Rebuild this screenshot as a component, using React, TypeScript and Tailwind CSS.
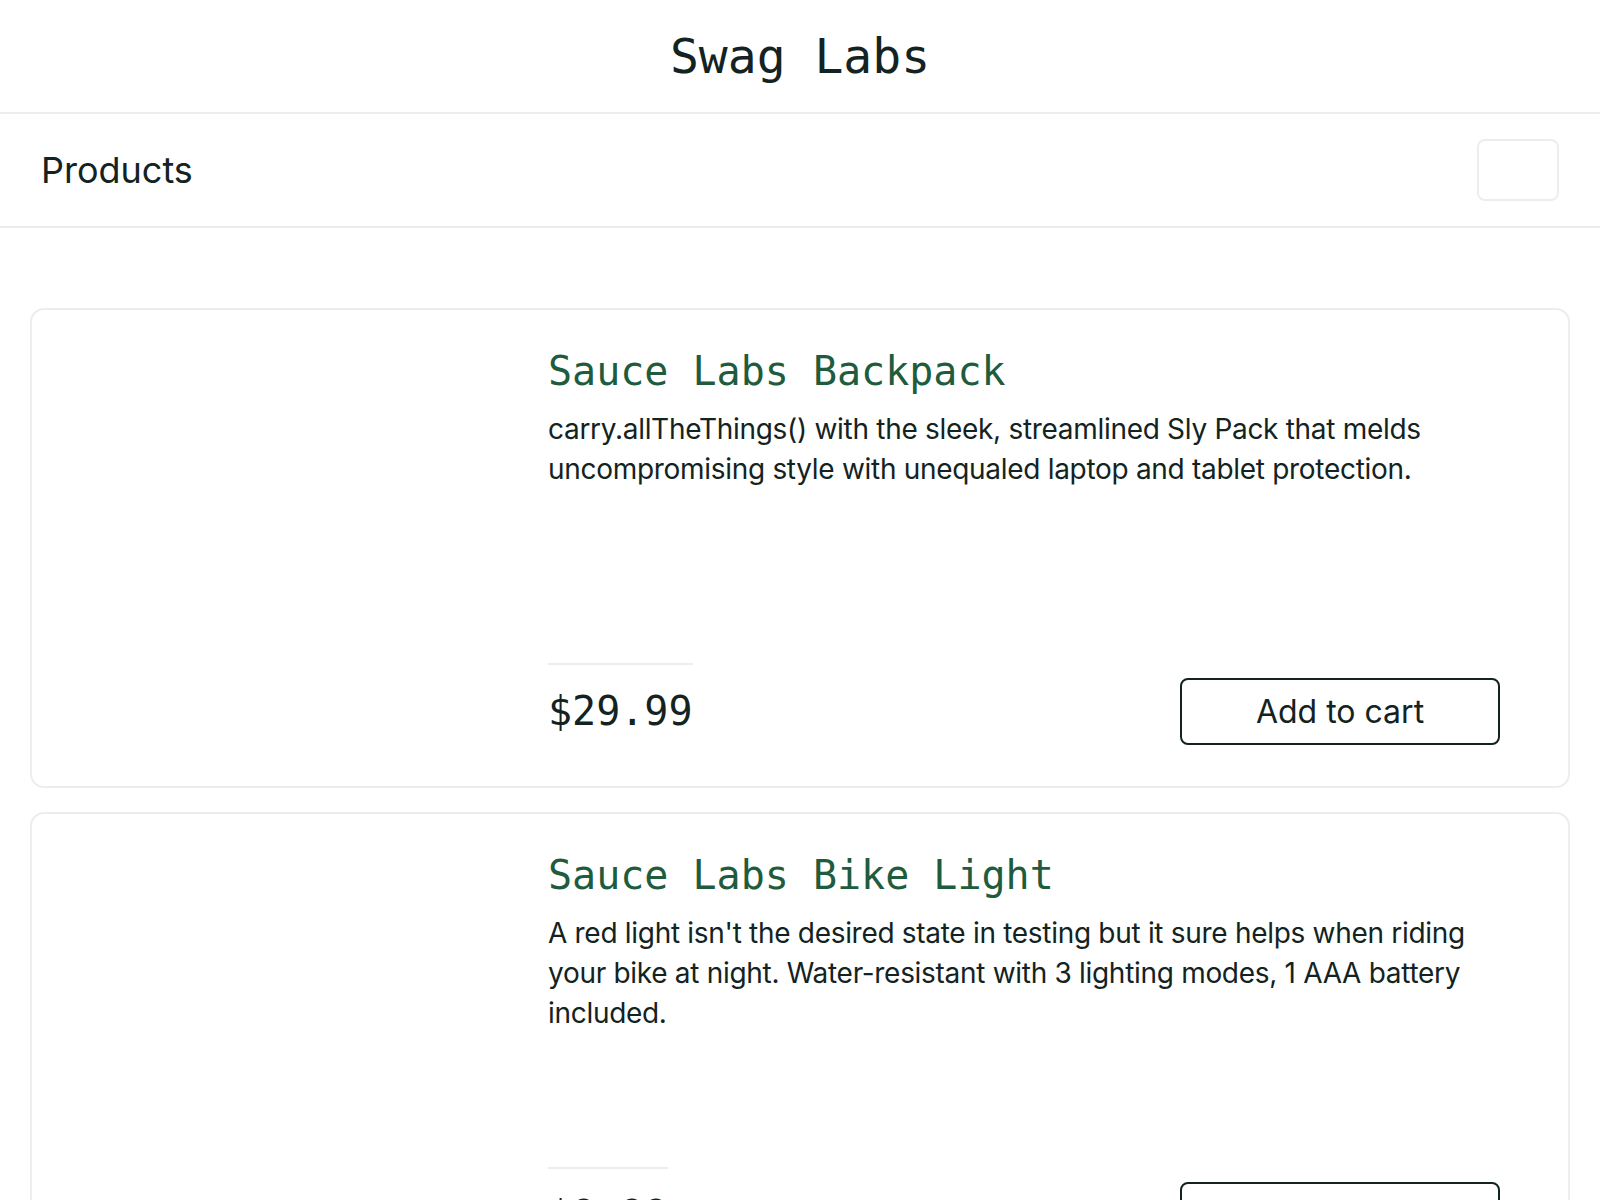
import React from "react";

const mono = "font-['DejaVu_Sans_Mono','Liberation_Mono',monospace]";
const sans = "font-['Inter','Noto_Sans',sans-serif]";

const products = [
  {
    name: "Sauce Labs Backpack",
    desc: "carry.allTheThings() with the sleek, streamlined Sly Pack that melds uncompromising style with unequaled laptop and tablet protection.",
    price: "$29.99",
  },
  {
    name: "Sauce Labs Bike Light",
    desc: "A red light isn't the desired state in testing but it sure helps when riding your bike at night. Water-resistant with 3 lighting modes, 1 AAA battery included.",
    price: "$9.99",
  },
  {
    name: "Sauce Labs Bolt T-Shirt",
    desc: "Get your testing superhero on with the Sauce Labs bolt T-shirt. From American Apparel, 100% ringspun combed cotton, heather gray with red bolt.",
    price: "$15.99",
  },
  {
    name: "Sauce Labs Fleece Jacket",
    desc: "It's not every day that you come across a midweight quarter-zip fleece jacket capable of handling everything from a relaxing day outdoors to a busy day at the office.",
    price: "$49.99",
  },
];

function Card({ p }: { p: (typeof products)[number] }) {
  return (
    <div className="flex h-[480px] rounded-[14px] border-2 border-[#ededed] bg-white">
      <div className="w-[516px] shrink-0" />
      <div className="flex flex-1 flex-col justify-between pr-[68px] pt-[37px] pb-[41px]">
        <div>
          <div className={`${mono} text-[40px] leading-[48px] text-[#1f5c3e]`}>{p.name}</div>
          <div className={`${sans} mt-[14px] text-[28px] leading-[40px] tracking-[-0.3px] text-[#132322]`}>{p.desc}</div>
        </div>
        <div className="flex items-end justify-between">
          <div className={`${mono} inline-block border-t-2 border-[#ededed] pt-[22px] pb-[10px] text-[40px] leading-[48px] text-[#132322]`}>
            {p.price}
          </div>
          <button
            className={`${sans} flex h-[67px] w-[320px] items-center justify-center rounded-[8px] border-2 border-[#132322] bg-white text-[32px] text-[#132322]`}
          >
            Add to cart
          </button>
        </div>
      </div>
    </div>
  );
}

export default function App() {
  return (
    <div className="min-h-screen bg-white text-[#132322]">
      <div className="flex h-[114px] items-center justify-center border-b-2 border-[#ededed]">
        <div className={`${mono} text-[48px] text-[#132322]`}>Swag Labs</div>
      </div>
      <div className="flex h-[114px] items-center justify-between border-b-2 border-[#ededed] px-[41px]">
        <div className={`${sans} text-[36px] text-[#132322]`}>Products</div>
        <div className="h-[62px] w-[82px] rounded-[8px] border-2 border-[#ededed] bg-white" />
      </div>
      <div className="flex flex-col gap-[24px] pl-[30px] pr-[30px] pt-[80px] pb-[40px]">
        {products.map((p) => (
          <Card key={p.name} p={p} />
        ))}
      </div>
    </div>
  );
}
